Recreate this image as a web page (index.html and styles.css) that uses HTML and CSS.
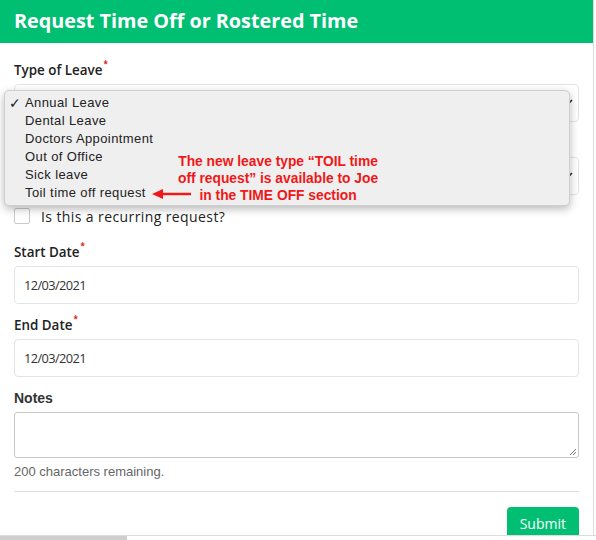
FILE: index.html
```html
<!DOCTYPE html>
<html>
<head>
<meta charset="utf-8">
<link rel="stylesheet" href="styles.css">
</head>
<body>
<div class="panel">
  <div class="panel-head">Request Time Off or Rostered Time</div>
  <form class="panel-body">
    <div class="group">
      <label class="lbl">Type of Leave<span class="req">*</span></label>
      <div class="select"><span class="chev"><svg width="9" height="6" viewBox="0 0 9 6"><path d="M1 1l3.5 3.5L8 1" fill="none" stroke="#333" stroke-width="1.6"/></svg></span></div>
    </div>
    <div class="group">
      <label class="lbl ghost">Reason</label>
      <div class="select"><span class="chev"><svg width="9" height="6" viewBox="0 0 9 6"><path d="M1 1l3.5 3.5L8 1" fill="none" stroke="#333" stroke-width="1.6"/></svg></span></div>
    </div>
    <div class="check-row">
      <span class="checkbox"></span>
      <span class="check-text">Is this a recurring request?</span>
    </div>
    <div class="group">
      <label class="lbl">Start Date<span class="req">*</span></label>
      <div class="input">12/03/2021</div>
    </div>
    <div class="group">
      <label class="lbl">End Date<span class="req">*</span></label>
      <div class="input">12/03/2021</div>
    </div>
    <div class="group notes">
      <label class="lbl lbl-notes">Notes</label>
      <div class="textarea">
        <svg class="grip" width="8" height="8" viewBox="0 0 8 8"><path d="M7 1L1 7M7 4L4 7" stroke="#777" stroke-width="1"/></svg>
      </div>
      <div class="help">200 characters remaining.</div>
    </div>
    <hr class="rule">
    <div class="actions"><span class="btn">Submit</span></div>
  </form>

  <div class="dropdown">
    <div class="opt"><span class="tick">✓</span>Annual Leave</div>
    <div class="opt">Dental Leave</div>
    <div class="opt">Doctors Appointment</div>
    <div class="opt">Out of Office</div>
    <div class="opt">Sick leave</div>
    <div class="opt">Toil time off request</div>
  </div>

  <div class="note">
    <svg class="arrow" width="40" height="12" viewBox="0 0 40 12"><path d="M39 6H9" stroke="#f01818" stroke-width="2.5"/><path d="M0 6L11 1V11Z" fill="#f01818"/></svg>
    <div class="note-text">The new leave type “TOIL time<br>off request” is available to Joe<br>in the TIME OFF section</div>
  </div>
</div>
<div class="hscroll"><div class="thumb"></div></div>
</body>
</html>
```
FILE: styles.css
```css
html, body {
  margin: 0;
  padding: 0;
  background: #fff;
}
body {
  font-family: "Open Sans", "Noto Sans", sans-serif;
  color: #222;
  width: 596px;
  height: 540px;
  overflow: hidden;
}
.panel {
  position: relative;
  width: 593px;
  border-right: 1px solid #dcdcdc;
  min-height: 540px;
}
.panel-head {
  background: #00bf73;
  color: #fff;
  height: 43px;
  box-sizing: border-box;
  padding: 7px 0 0 14px;
  font-size: 19.8px;
  font-weight: 700;
  line-height: 28px;
}
.panel-body {
  display: flex;
  flex-direction: column;
  padding: 17px 14px 0 14px;
  margin: 0;
}
.group {
  display: flex;
  flex-direction: column;
}
.lbl {
  font-size: 13.4px;
  font-weight: 600;
  line-height: 20px;
  height: 20px;
  margin-bottom: 4px;
  color: #222;
}
.ghost { visibility: hidden; }
.req {
  color: #e41b1b;
  font-size: 8px;
  font-weight: 700;
  vertical-align: top;
  line-height: 8px;
  margin-left: 1px;
}
.select {
  height: 38px;
  box-sizing: border-box;
  border: 1px solid #e3e3ec;
  border-radius: 4px;
  position: relative;
  margin-bottom: 11px;
}
.chev {
  position: absolute;
  right: 5px;
  top: 14px;
  line-height: 0;
}
.check-row {
  display: flex;
  align-items: center;
  gap: 11px;
  height: 18px;
  margin: 1px 0 17px 0;
}
.checkbox {
  width: 14px;
  height: 14px;
  border: 1px solid #c9c9c9;
  border-radius: 2px;
  background: #fff;
}
.check-text {
  font-size: 14px;
  letter-spacing: 0.4px;
  color: #222;
}
.input {
  height: 38px;
  box-sizing: border-box;
  border: 1px solid #e3e3ec;
  border-radius: 4px;
  padding: 0 9px;
  font-size: 12.8px;
  letter-spacing: -0.6px;
  line-height: 36px;
  color: #333;
  margin-bottom: 11px;
}
.lbl-notes {
  font-family: "Liberation Sans", Arial, sans-serif;
  font-weight: 700;
  font-size: 14px;
  color: #333;
  margin-bottom: 4px;
}
.textarea {
  height: 46px;
  box-sizing: border-box;
  border: 1px solid #c6c6c6;
  border-radius: 3px;
  position: relative;
}
.grip {
  position: absolute;
  right: 1px;
  bottom: 1px;
}
.help {
  font-family: "Liberation Sans", Arial, sans-serif;
  font-size: 13px;
  color: #666;
  margin-top: 7px;
  line-height: 14px;
}
.rule {
  border: 0;
  border-top: 1px solid #dedede;
  margin: 12px 0 0 0;
  height: 0;
}
.actions {
  display: flex;
  justify-content: flex-end;
  margin-top: 15px;
}
.btn {
  background: #00bf73;
  color: #fff;
  font-size: 14px;
  font-weight: 500;
  padding: 0 13px;
  height: 36px;
  line-height: 34px;
  border-radius: 4px;
}
.dropdown {
  position: absolute;
  left: 4px;
  top: 90px;
  width: 566px;
  height: 116px;
  box-sizing: border-box;
  background: #efefef;
  border: 1px solid #cfcfcf;
  border-radius: 5px;
  box-shadow: 0 3px 8px rgba(0,0,0,0.28);
  padding-top: 3px;
  font-family: "Liberation Sans", Arial, sans-serif;
  font-size: 13px;
  letter-spacing: 0.4px;
  color: #222;
}
.opt {
  position: relative;
  height: 18px;
  line-height: 18px;
  padding-left: 20px;
}
.tick {
  position: absolute;
  left: 4px;
  top: 0;
  font-size: 14px;
  font-weight: 700;
  font-family: "DejaVu Sans", sans-serif;
}
.note {
  position: absolute;
  left: 152px;
  top: 152px;
  display: flex;
  align-items: flex-end;
}
.arrow {
  margin-bottom: 3px;
}
.note-text {
  font-family: "Liberation Sans", Arial, sans-serif;
  font-weight: 700;
  font-size: 13.8px;
  line-height: 17px;
  color: #f01818;
  text-align: center;
  margin-left: -14px;
  position: relative;
  top: 1px;
}
.hscroll {
  position: fixed;
  left: 0;
  bottom: 0;
  width: 596px;
  height: 4px;
  border-top: 1px solid #dcdcdc;
  background: #fff;
}
.thumb {
  width: 127px;
  height: 4px;
  background: #cfcfcf;
}
```
